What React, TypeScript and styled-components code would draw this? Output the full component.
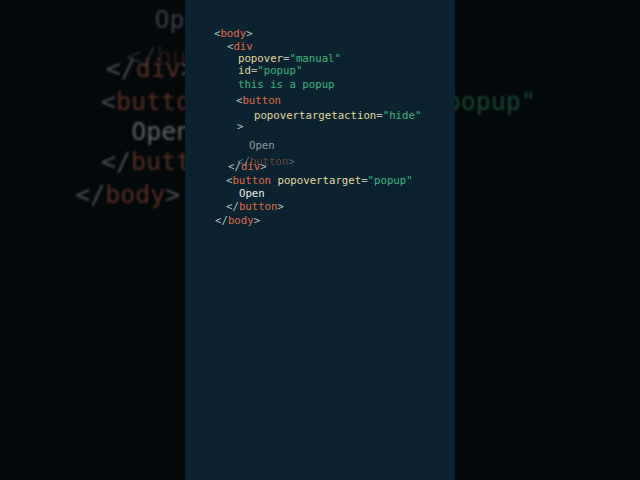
import React from "react";
import styled, { createGlobalStyle } from "styled-components";

const Global = createGlobalStyle`
  html, body { margin: 0; padding: 0; background: #03080b; }
  body { font-family: "DejaVu Sans Mono", "Liberation Mono", monospace; }
`;

const Stage = styled.div`
  position: relative;
  width: 640px;
  height: 480px;
  overflow: hidden;
  display: flex;
  justify-content: center;
  background: #03080b;
`;

const Backdrop = styled.div`
  position: absolute;
  inset: 0;
  display: flex;
  justify-content: center;
  transform: scale(2.33);
  transform-origin: 320px 240px;
  opacity: 0.38;
  filter: blur(0.5px);
  pointer-events: none;
`;

const Panel = styled.div<{ $solid?: boolean }>`
  position: relative;
  width: 270px;
  height: 480px;
  box-sizing: border-box;
  padding-top: 28px;
  background: ${(p) => (p.$solid ? "#0b2330" : "transparent")};
  display: flex;
  flex-direction: column;
`;

const Line = styled.div<{ $indent: number; $gap: number }>`
  position: relative;
  margin-left: ${(p) => p.$indent}px;
  margin-top: ${(p) => p.$gap}px;
  height: 12px;
  line-height: 12px;
  font-size: 10.7px;
  white-space: pre;
  color: #c5cbce;
`;

const Punct = styled.span`
  color: #b9c0c4;
`;
const Tag = styled.span`
  color: #e0694a;
`;
const Attr = styled.span`
  color: #e2d69e;
`;
const Str = styled.span`
  color: #3fb37d;
`;
const Text = styled.span<{ $dim?: boolean }>`
  color: ${(p) => (p.$dim ? "#8e9a9f" : "#e8ecee")};
`;
const Ghost = styled.span`
  position: absolute;
  left: 9px;
  top: -5px;
  opacity: 0.45;
`;

const Code: React.FC = () => (
  <>
    <Line $indent={29} $gap={0}>
      <Punct>&lt;</Punct><Tag>body</Tag><Punct>&gt;</Punct>
    </Line>
    <Line $indent={42} $gap={1}>
      <Punct>&lt;</Punct><Tag>div</Tag>
    </Line>
    <Line $indent={53} $gap={0}>
      <Attr>popover</Attr><Punct>=</Punct><Str>"manual"</Str>
    </Line>
    <Line $indent={53} $gap={0}>
      <Attr>id</Attr><Punct>=</Punct><Str>"popup"</Str>
    </Line>
    <Line $indent={53} $gap={2}>
      <Str>this is a popup</Str>
    </Line>
    <Line $indent={51} $gap={4}>
      <Punct>&lt;</Punct><Tag>button</Tag>
    </Line>
    <Line $indent={69} $gap={3}>
      <Attr>popovertargetaction</Attr><Punct>=</Punct><Str>"hide"</Str>
    </Line>
    <Line $indent={52} $gap={-1}>
      <Punct>&gt;</Punct>
    </Line>
    <Line $indent={64} $gap={7}>
      <Text $dim>Open</Text>
    </Line>
    <Line $indent={43} $gap={9}>
      <Ghost>
        <Punct>&lt;/</Punct><Tag>button</Tag><Punct>&gt;</Punct>
      </Ghost>
      <Punct>&lt;/</Punct><Tag>div</Tag><Punct>&gt;</Punct>
    </Line>
    <Line $indent={41} $gap={2}>
      <Punct>&lt;</Punct><Tag>button</Tag> <Attr>popovertarget</Attr><Punct>=</Punct><Str>"popup"</Str>
    </Line>
    <Line $indent={54} $gap={1}>
      <Text>Open</Text>
    </Line>
    <Line $indent={41} $gap={1}>
      <Punct>&lt;/</Punct><Tag>button</Tag><Punct>&gt;</Punct>
    </Line>
    <Line $indent={30} $gap={2}>
      <Punct>&lt;/</Punct><Tag>body</Tag><Punct>&gt;</Punct>
    </Line>
  </>
);

export default function App() {
  return (
    <Stage>
      <Global />
      <Backdrop aria-hidden="true">
        <Panel>
          <Code />
        </Panel>
      </Backdrop>
      <Panel $solid>
        <Code />
      </Panel>
    </Stage>
  );
}
